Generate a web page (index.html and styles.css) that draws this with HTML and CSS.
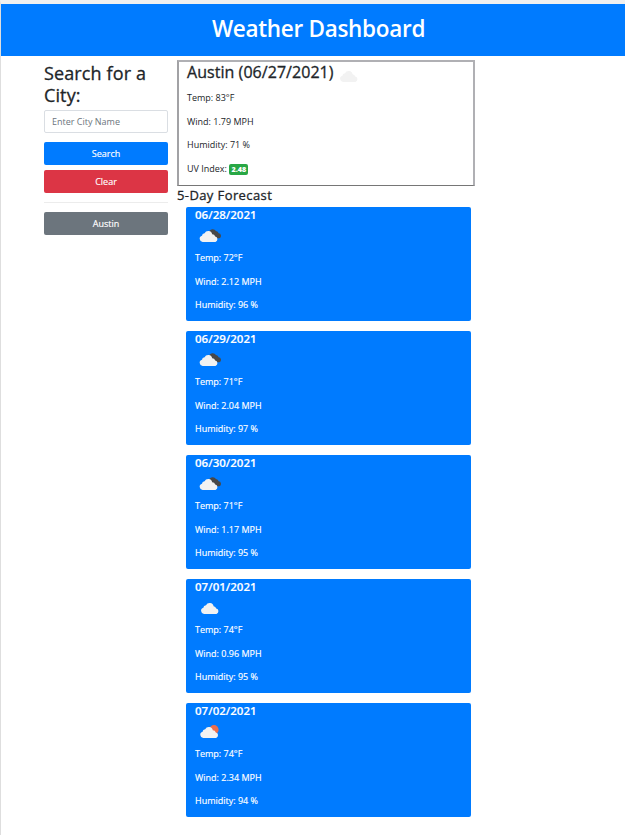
FILE: index.html
```html
<!DOCTYPE html>
<html lang="en">
<head>
<meta charset="utf-8">
<title>Weather Dashboard</title>
<link rel="stylesheet" href="styles.css">
</head>
<body>
<svg class="defs" aria-hidden="true">
  <symbol id="cloud" viewBox="0 0 30 30"><path fill="#f2f2f2" d="M9 20.9a3.1 3.1 0 0 1-.6-6.1 2.6 2.6 0 0 1 2.6-2.5 4 4 0 0 1 7.6.9 3.2 3.2 0 0 1 2.600 2.300 2.800 2.800 0 0 1 .3 5.400z"/></symbol>
  <symbol id="broken" viewBox="0 0 30 30"><path fill="#484848" d="M14 10.800a3.900 3.900 0 0 1 7-.8 2.800 2.800 0 0 1 2.600 2.300 2.600 2.600 0 0 1 .8 5h-4z"/><path fill="#f2f2f2" d="M7.600 20.900a3.100 3.100 0 0 1-.6-6.100 2.600 2.600 0 0 1 2.600-2.500 4 4 0 0 1 7.600.9 3.200 3.200 0 0 1 3 2.300 2.800 2.800 0 0 1 .3 5.400z"/></symbol>
  <symbol id="sunny" viewBox="0 0 30 30"><circle cx="19" cy="12.700" r="4.600" fill="#ec6e4c"/><path fill="#f2f2f2" d="M8.200 20.900a3.100 3.100 0 0 1-.6-6.100 2.600 2.600 0 0 1 2.600-2.500 4 4 0 0 1 7.600.9 3.200 3.200 0 0 1 3 2.300 2.800 2.800 0 0 1 .3 5.400z"/></symbol>
</svg>
<header class="banner"><h1>Weather Dashboard</h1></header>
<main class="layout">
  <aside class="sidebar">
    <h2>Search for a City:</h2>
    <input class="field" type="text" placeholder="Enter City Name">
    <button class="btn primary">Search</button>
    <button class="btn danger">Clear</button>
    <hr>
    <button class="btn secondary">Austin</button>
  </aside>
  <section class="content">
    <article class="current">
      <h2><span>Austin (06/27/2021)</span><svg class="icon"><use href="#cloud"/></svg></h2>
      <p>Temp: 83°F</p>
      <p>Wind: 1.79 MPH</p>
      <p>Humidity: 71 %</p>
      <p>UV Index: <span class="badge">2.48</span></p>
    </article>
    <h3 class="forecast-title">5-Day Forecast</h3>
    <div class="forecast">
      <article class="card"><h4>06/28/2021</h4><svg class="icon"><use href="#broken"/></svg><p>Temp: 72°F</p><p>Wind: 2.12 MPH</p><p>Humidity: 96 %</p></article>
      <article class="card"><h4>06/29/2021</h4><svg class="icon"><use href="#broken"/></svg><p>Temp: 71°F</p><p>Wind: 2.04 MPH</p><p>Humidity: 97 %</p></article>
      <article class="card"><h4>06/30/2021</h4><svg class="icon"><use href="#broken"/></svg><p>Temp: 71°F</p><p>Wind: 1.17 MPH</p><p>Humidity: 95 %</p></article>
      <article class="card"><h4>07/01/2021</h4><svg class="icon"><use href="#cloud"/></svg><p>Temp: 74°F</p><p>Wind: 0.96 MPH</p><p>Humidity: 95 %</p></article>
      <article class="card"><h4>07/02/2021</h4><svg class="icon"><use href="#sunny"/></svg><p>Temp: 74°F</p><p>Wind: 2.34 MPH</p><p>Humidity: 94 %</p></article>
    </div>
  </section>
</main>
</body>
</html>
```
FILE: styles.css
```css
* { box-sizing: border-box; }
body {
  margin: 0;
  height: 835px;
  overflow: hidden;
  border-top: 4px solid #f0f0f0;
  border-left: 1px solid #dedede;
  background: #fff;
  color: #212529;
  font: 9px/14px "Open Sans", "Noto Sans", sans-serif;
}
h1, h2, h3, h4, p { margin: 0; font-weight: 500; }
h2, h3 { -webkit-text-stroke: .3px currentColor; }
.defs { display: none; }
.banner {
  height: 52px;
  padding-left: 11px;
  background: #007bff;
  color: #fff;
  text-align: center;
}
h1 { font-size: 22.5px; line-height: 50px; font-weight: 600; letter-spacing: -.3px; }
.layout { display: flex; padding: 4px 0 0 43px; }
.sidebar { width: 124px; margin-right: 9px; padding-top: 2px; }
.sidebar h2 { height: 48px; font-size: 18px; line-height: 22px; letter-spacing: .12px; }
.field {
  display: block;
  width: 124px;
  height: 23px;
  margin: 0 0 9px;
  padding: 0 7px;
  border: 1px solid #dadee3;
  border-radius: 2px;
  background: #fff;
  font: 9px "Open Sans", "Noto Sans", sans-serif;
}
.field::placeholder { color: #6c757d; opacity: 1; }
.btn {
  display: block;
  width: 124px;
  height: 23px;
  margin: 0 0 5px;
  padding: 0;
  border: 0;
  border-radius: 2px;
  color: #fff;
  font: 500 9px/23px "Open Sans", "Noto Sans", sans-serif;
  -webkit-text-stroke: .15px currentColor;
}
.primary { background: #007bff; }
.danger { background: #dc3545; }
.secondary { background: #6c757d; }
hr { margin: 9px 0; border: 0; border-top: 1px solid #ececec; }
.content { width: 298px; }
.current {
  height: 126px;
  padding: 0 8px;
  border: 2px solid #b0b0b4;
  border-bottom: 1px solid #767676;
  border-left-color: #a2a2a5;
}
.current h2 { display: flex; height: 29px; font-size: 16px; line-height: 20px; letter-spacing: .05px; }
.icon { display: block; width: 30px; height: 30px; }
.current .icon { margin-top: -1px; }
p { height: 14px; margin-bottom: 9.6px; }
.badge {
  display: inline-block;
  width: 19px;
  height: 11px;
  border-radius: 2px;
  background: #28a745;
  color: #fff;
  font-size: 7.2px;
  font-weight: 800;
  line-height: 11px;
  text-align: center;
}
.forecast-title { height: 21px; font-size: 13px; line-height: 19px; letter-spacing: .4px; }
.forecast { display: grid; gap: 10px; padding-left: 9px; }
.card {
  width: 285px;
  height: 114px;
  padding-left: 9px;
  border-radius: 2px;
  background: #007bff;
  color: #fff;
  -webkit-text-stroke: .15px currentColor;
}
.card h4 { height: 14px; font-size: 11.5px; line-height: 16px; font-weight: 600; }
```
